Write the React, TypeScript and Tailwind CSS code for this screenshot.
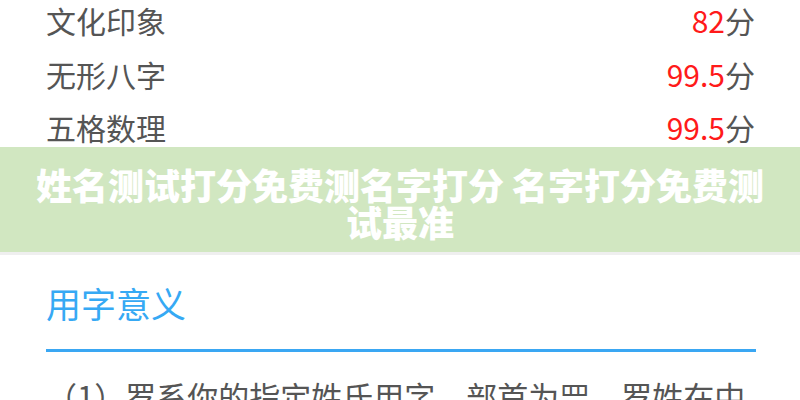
import React from "react";

const rows = [
  { label: "文化印象", score: "82" },
  { label: "无形八字", score: "99.5" },
  { label: "五格数理", score: "99.5" },
];

export default function App() {
  return (
    <div
      className="w-[800px] h-[400px] overflow-hidden bg-white"
      style={{ fontFamily: '"Noto Sans CJK SC", "Noto Sans", sans-serif' }}
    >
      <div className="flex flex-col gap-[13.5px] pl-[46px] pr-[45px]">
        {rows.map((r) => (
          <div key={r.label} className="flex items-center justify-between h-[40px] text-[30px] leading-[40px] text-[#555555]">
            <span>{r.label}</span>
            <span>
              <span className="text-[#ff1a1a]">{r.score}</span>
              <span>分</span>
            </span>
          </div>
        ))}
      </div>
      <div className="h-[105px] bg-[#d1e7c1] px-[30px] pt-[19px] text-center text-white font-black text-[36px] leading-[37px]">
        姓名测试打分免费测名字打分 名字打分免费测试最准
      </div>
      <div className="h-[3px] bg-[#efefef]" />
      <div className="pl-[46px] pr-[44px] pt-[28px]">
        <div className="text-[35px] leading-[40px] text-[#36a9f4]">用字意义</div>
        <div className="mt-[26px] h-[3px] bg-[#3aa7f3]" />
        <div className="mt-[24px] text-[31px] leading-[40px] text-[#555555] whitespace-nowrap">
          （1）罗系你的指定姓氏用字，部首为罒，罗姓在中
        </div>
      </div>
    </div>
  );
}
